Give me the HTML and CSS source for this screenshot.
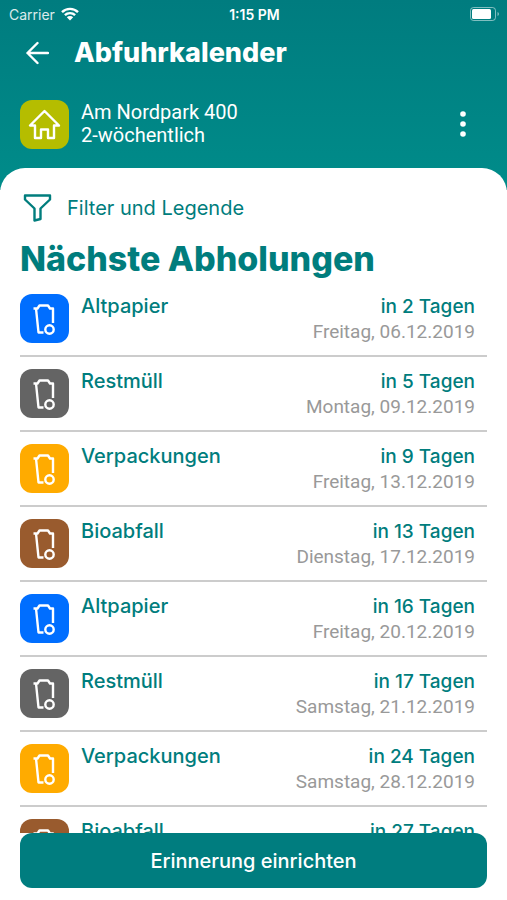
FILE: index.html
```html
<!DOCTYPE html>
<html lang="de">
<head>
    <meta charset="UTF-8">
    <meta name="viewport" content="width=device-width, initial-scale=1.0">
    <title>Abfuhrkalender</title>

    <link rel="stylesheet" href="styles.css">
</head>
<body>

    <!-- shared bin icon -->
    <svg class="sprite" aria-hidden="true">
        <symbol id="bin" viewBox="0 0 49 49">
            <path d="M13.500 14.500h4l2-3h8.500l2 3h3V29M16 14.500L18.500 38.500h5"/>
            <circle cx="29.500" cy="35.500" r="4.200"/>
        </symbol>
    </svg>

    <header class="header">
        <div class="status-bar">
            <div class="carrier">
                <span>Carrier</span>
                <svg class="wifi" viewBox="0 0 18 14" aria-hidden="true">
                    <path d="M1 5.200a11.300 11.300 0 0 1 16 0M3.900 8.200a7.200 7.200 0 0 1 10.200 0"/>
                    <path class="wifi-dot" d="M9 13.500L5.800 10.300a4.600 4.600 0 0 1 6.400 0z"/>
                </svg>
            </div>
            <span class="time">1:15 PM</span>
            <svg class="battery" viewBox="0 0 30 14" aria-hidden="true">
                <rect class="battery-case" x="0.500" y="0.500" width="25" height="13" rx="3"/>
                <rect class="battery-level" x="2" y="2" width="19" height="10" rx="1.500"/>
                <path class="battery-cap" d="M27.500 5v4q1.500-.5 1.500-2t-1.500-2z"/>
            </svg>
        </div>

        <div class="title-bar">
            <button class="icon-btn" aria-label="Zurück">
                <svg class="back-icon" viewBox="0 0 24 24"><path d="M23 12H2.500M12.500 2L2.500 12l10 10"/></svg>
            </button>
            <h1>Abfuhrkalender</h1>
        </div>

        <div class="address">
            <div class="tile home">
                <svg viewBox="0 0 49 49" aria-hidden="true">
                    <path d="M24.500 11L10 25.500h5V38h6v-8.500h7V38h6V25.500h5z"/>
                </svg>
            </div>
            <p class="address-text">Am Nordpark 400<br>2-wöchentlich</p>
            <button class="icon-btn" aria-label="Mehr">
                <svg class="more-icon" viewBox="0 0 6 26">
                    <circle cx="3" cy="3" r="2.800"/>
                    <circle cx="3" cy="13" r="2.800"/>
                    <circle cx="3" cy="23" r="2.800"/>
                </svg>
            </button>
        </div>
    </header>

    <main class="sheet">
        <button class="filter-btn">
            <svg class="filter-icon" viewBox="0 0 28 28" aria-hidden="true">
                <path d="M1.500 1.500h25v4L17 14.500V25l-6 1.500v-12l-9.500-9z"/>
            </svg>
            Filter und Legende
        </button>

        <h2>Nächste Abholungen</h2>

        <ul class="pickups">
            <li class="pickup">
                <div class="tile paper"><svg><use href="#bin"/></svg></div>
                <span class="name">Altpapier</span>
                <div class="when"><strong>in 2 Tagen</strong><span>Freitag, 06.12.2019</span></div>
            </li>
            <li class="pickup">
                <div class="tile residual"><svg><use href="#bin"/></svg></div>
                <span class="name">Restmüll</span>
                <div class="when"><strong>in 5 Tagen</strong><span>Montag, 09.12.2019</span></div>
            </li>
            <li class="pickup">
                <div class="tile packaging"><svg><use href="#bin"/></svg></div>
                <span class="name">Verpackungen</span>
                <div class="when"><strong>in 9 Tagen</strong><span>Freitag, 13.12.2019</span></div>
            </li>
            <li class="pickup">
                <div class="tile organic"><svg><use href="#bin"/></svg></div>
                <span class="name">Bioabfall</span>
                <div class="when"><strong>in 13 Tagen</strong><span>Dienstag, 17.12.2019</span></div>
            </li>
            <li class="pickup">
                <div class="tile paper"><svg><use href="#bin"/></svg></div>
                <span class="name">Altpapier</span>
                <div class="when"><strong>in 16 Tagen</strong><span>Freitag, 20.12.2019</span></div>
            </li>
            <li class="pickup">
                <div class="tile residual"><svg><use href="#bin"/></svg></div>
                <span class="name">Restmüll</span>
                <div class="when"><strong>in 17 Tagen</strong><span>Samstag, 21.12.2019</span></div>
            </li>
            <li class="pickup">
                <div class="tile packaging"><svg><use href="#bin"/></svg></div>
                <span class="name">Verpackungen</span>
                <div class="when"><strong>in 24 Tagen</strong><span>Samstag, 28.12.2019</span></div>
            </li>
            <li class="pickup">
                <div class="tile organic"><svg><use href="#bin"/></svg></div>
                <span class="name">Bioabfall</span>
                <div class="when"><strong>in 27 Tagen</strong></div>
            </li>
        </ul>
    </main>

    <footer class="footer">
        <button class="reminder-btn">Erinnerung einrichten</button>
    </footer>

</body>
</html>
```
FILE: styles.css
```css
* {
    box-sizing: border-box;
}

body {
    display: flex;
    flex-direction: column;
    height: 100vh;
    margin: 0;
    background: #fff;
    color: #007d7d;
    font-family: Inter, sans-serif;
}

h1, h2, p, ul {
    margin: 0;
    padding: 0;
}

button {
    padding: 0;
    border: none;
    background: none;
    color: inherit;
    font-family: inherit;
    cursor: pointer;
}

svg {
    display: block;
    fill: none;
    stroke: currentColor;
    stroke-width: 2.4;
    stroke-linejoin: round;
}

.sprite {
    position: absolute;
    width: 0;
    height: 0;
}

.header {
    padding-bottom: 30px;
    background: linear-gradient(#007c7f, #008c8a);
    color: #fff;
}

.status-bar {
    display: grid;
    grid-template-columns: 1fr auto 1fr;
    align-items: center;
    height: 28px;
    padding: 0 7px 0 9px;
    font-size: 14px;
}

.carrier {
    display: flex;
    align-items: center;
    gap: 6px;
}

.carrier span {
    opacity: 0.85;
}

.time {
    font-weight: 600;
}

.wifi {
    width: 18px;
    height: 14px;
}

.wifi-dot, .battery-level, .battery-cap {
    fill: #fff;
    stroke: none;
}

.battery {
    justify-self: end;
    width: 30px;
    height: 14px;
    stroke-width: 1;
}

.battery-case, .battery-cap {
    opacity: 0.5;
}

.title-bar {
    display: flex;
    align-items: center;
    gap: 25px;
    height: 50px;
    padding: 0 25px;
}

.back-icon {
    width: 24px;
    height: 24px;
    stroke-linecap: round;
}

h1 {
    font-size: 27px;
    font-weight: 800;
    line-height: 32px;
}

.address {
    display: flex;
    align-items: center;
    gap: 12px;
    height: 72px;
    margin-top: 10px;
    padding: 0 41px 0 20px;
}

.address-text {
    flex: 1;
    font-family: Roboto, sans-serif;
    font-size: 20px;
    line-height: 23px;
}

.more-icon {
    width: 6px;
    height: 26px;
    fill: #fff;
    stroke: none;
}

.tile {
    flex: none;
    width: 49px;
    height: 49px;
    border-radius: 12px;
    color: #fff;
}

.tile svg {
    width: 49px;
    height: 49px;
}

.home {
    background: #b5bd00;
}

.paper {
    background: #006eff;
}

.residual {
    background: #646464;
}

.packaging {
    background: #ffab00;
}

.organic {
    background: #995b2e;
}

.sheet {
    display: flex;
    flex: 1;
    flex-direction: column;
    min-height: 0;
    margin-top: -22px;
    padding: 25px 20px 0;
    border-radius: 25px 25px 0 0;
    background: #fff;
}

.filter-btn {
    display: flex;
    align-items: center;
    align-self: flex-start;
    gap: 15px;
    padding-left: 3px;
    font-size: 20px;
    line-height: 30px;
}

.filter-icon {
    width: 29px;
    height: 28px;
}

h2 {
    margin-top: 16px;
    font-size: 34px;
    font-weight: 800;
    line-height: 40px;
}

.pickups {
    flex: 1;
    min-height: 0;
    margin-top: 3px;
    overflow-y: auto;
    scrollbar-width: none;
    list-style: none;
}

.pickup {
    display: flex;
    gap: 12px;
    height: 75px;
    padding: 12px 12px 0 0;
    border-bottom: 2px solid #ccc;
    font-size: 19px;
    line-height: 25px;
}

.name {
    flex: 1;
    font-size: 20px;
    font-weight: 500;
}

.when {
    display: flex;
    flex-direction: column;
    text-align: right;
}

.when strong {
    font-weight: 500;
}

.when span {
    color: #999;
    font-family: Roboto, sans-serif;
}

.footer {
    padding: 0 20px 12px;
}

.reminder-btn {
    width: 100%;
    height: 55px;
    border-radius: 12px;
    background: #007d7f;
    color: #fff;
    font-size: 20px;
    font-weight: 500;
}
```
